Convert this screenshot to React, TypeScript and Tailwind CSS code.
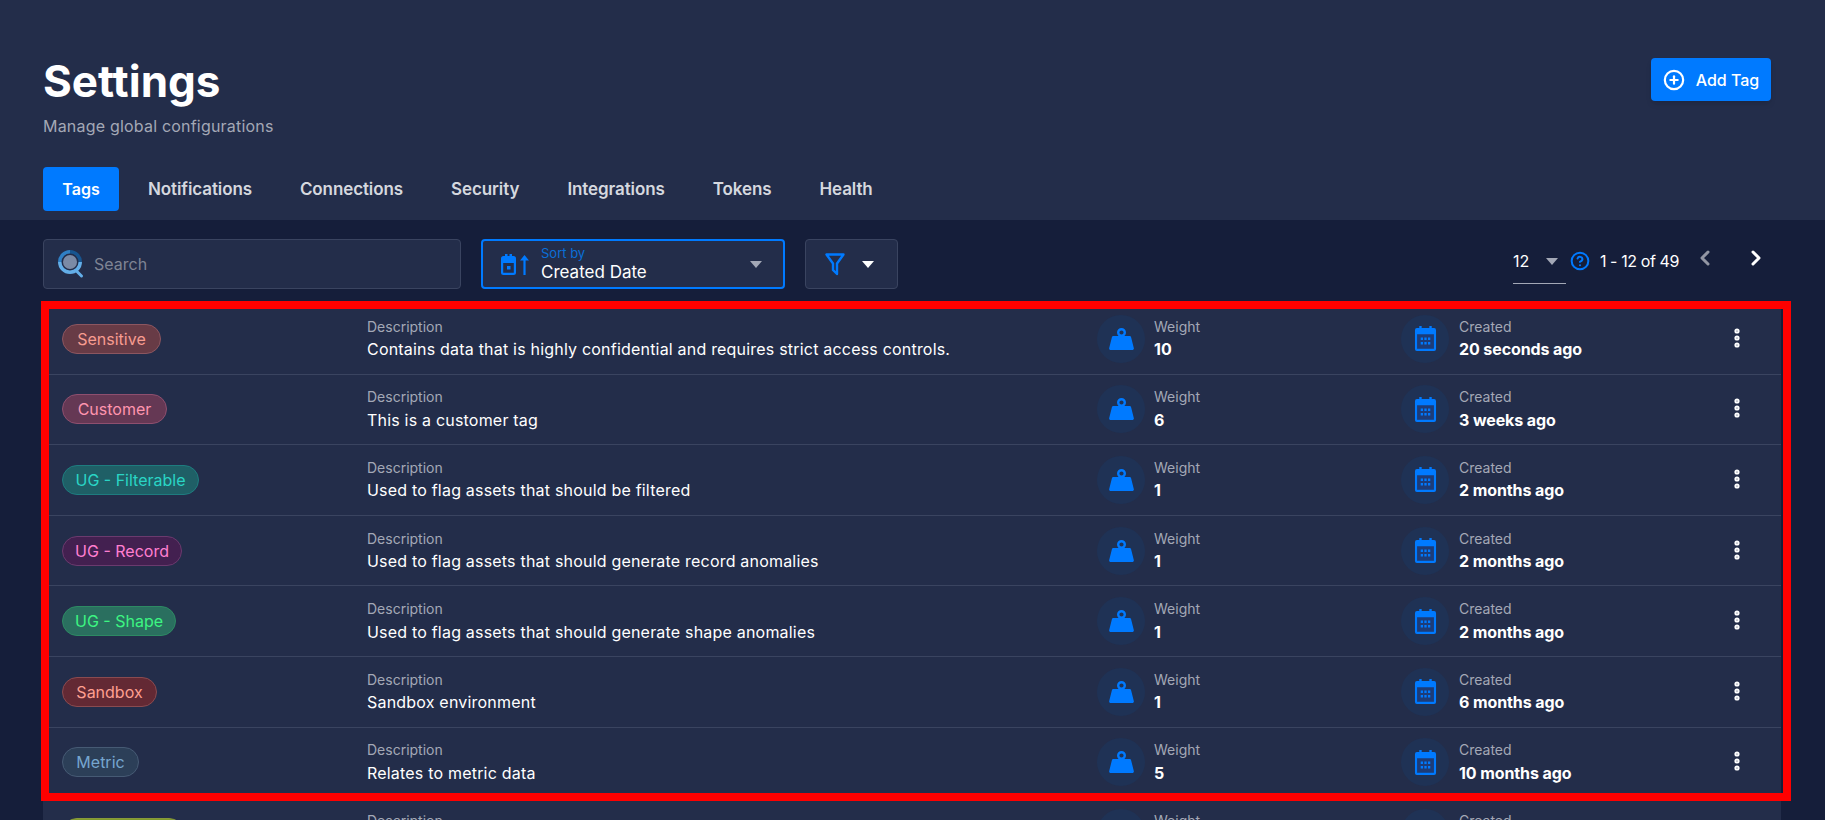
import { ChevronLeft, ChevronRight, CirclePlus, CircleHelp, EllipsisVertical } from 'lucide-react';

const tags = [
  { name: 'Sensitive', cls: 'w-[99px] bg-[#683b46] border-[#8c5660] text-[#f89c90]', desc: 'Contains data that is highly confidential and requires strict access controls.', weight: '10', created: '20 seconds ago' },
  { name: 'Customer', cls: 'w-[105px] bg-[#653854] border-[#8e4f6f] text-[#ff95ae]', desc: 'This is a customer tag', weight: '6', created: '3 weeks ago' },
  { name: 'UG - Filterable', cls: 'w-[137px] bg-[#1f5f66] border-[#1e7c7f] text-[#2ad5c5]', desc: 'Used to flag assets that should be filtered', weight: '1', created: '2 months ago' },
  { name: 'UG - Record', cls: 'w-[120px] bg-[#432050] border-[#6b3a6e] text-[#ff7fd0]', desc: 'Used to flag assets that should generate record anomalies', weight: '1', created: '2 months ago' },
  { name: 'UG - Shape', cls: 'w-[114px] bg-[#2a6f5f] border-[#2d8a63] text-[#3df582]', desc: 'Used to flag assets that should generate shape anomalies', weight: '1', created: '2 months ago' },
  { name: 'Sandbox', cls: 'w-[95px] bg-[#632934] border-[#8a4b50] text-[#ff9f90]', desc: 'Sandbox environment', weight: '1', created: '6 months ago' },
  { name: 'Metric', cls: 'w-[77px] bg-[#2c3f58] border-[#465a74] text-[#76a6cf]', desc: 'Relates to metric data', weight: '5', created: '10 months ago' },
  { name: 'Production', cls: 'w-[122px] bg-[#7f9a2c] border-[#87993a] text-[#d6ee55]', desc: 'Used to flag production assets', weight: '1', created: '10 months ago' },
];

const tabs = ['Notifications', 'Connections', 'Security', 'Integrations', 'Tokens', 'Health'];

function WeightIcon() {
  return (
    <svg width="25" height="22" viewBox="0 0 25 22" fill="#007aff">
      <circle cx="12.5" cy="4.500" r="3.300" fill="none" stroke="#007aff" strokeWidth="2.400" />
      <path d="M4.500 8H20.500c.8 0 1.400.5 1.600 1.200L24.800 20c.3 1-.4 2-1.400 2H1.600c-1 0-1.700-1-1.400-2L2.900 9.200C3.100 8.500 3.700 8 4.500 8z" />
    </svg>
  );
}

function CalendarIcon() {
  return (
    <svg width="23" height="25" viewBox="0 0 24 24" preserveAspectRatio="none" fill="#007aff">
      <rect x="3" y="7" width="18" height="15" fill="#1d3c78" />
      <path fillRule="evenodd" d="M5.500 0H8v2h8V0h2.500v2H21a2 2 0 0 1 2 2v18a2 2 0 0 1-2 2H3a2 2 0 0 1-2-2V4a2 2 0 0 1 2-2h2.500V0zM3.200 8v13.800h17.600V8H3.200z" />
      <path d="M7 11h2.400v2.400H7zM10.800 11h2.400v2.400h-2.400zM14.600 11H17v2.400h-2.400zM7 15.400h2.400v2.400H7zM10.800 15.400h2.400v2.400h-2.400zM14.600 15.400H17v2.400h-2.400z" />
    </svg>
  );
}

function SortDateIcon() {
  return (
    <svg width="28" height="21" viewBox="0 0 28 21" fill="#007aff">
      <path fillRule="evenodd" d="M2.500 2H4V0h2.500v2h2V0H11v2h1.500A2.500 2.500 0 0 1 15 4.500v14a2.500 2.500 0 0 1-2.500 2.500h-10A2.500 2.500 0 0 1 0 18.500v-14A2.500 2.500 0 0 1 2.500 2zM2.200 9v9.800h10.600V9H2.200zM6 12h3.500v3.500H6V12z" />
      <path d="M23.500 1L28 6.500h-3.400V21h-2.200V6.500H19z" />
    </svg>
  );
}

function FilterIcon() {
  return (
    <svg width="20" height="23" viewBox="0 0 20 23" fill="none" stroke="#007aff" strokeWidth="2.400" strokeLinejoin="round">
      <path d="M1.500 1.500H18.500L12 10.500V21L8 17V10.500z" />
    </svg>
  );
}

function SearchLogo() {
  return (
    <svg width="26" height="29" viewBox="0 0 26 29" fill="none" strokeWidth="3.500">
      <circle cx="12" cy="12" r="7" fill="#7b8aa5" stroke="none" />
      <path d="M12 1.750A10.250 10.250 0 0 1 22.250 12" stroke="#17558f" />
      <path d="M12 1.750A10.250 10.250 0 0 0 1.750 12" stroke="#2f7fc4" />
      <path d="M1.750 12A10.250 10.250 0 0 0 22.250 12" stroke="#63aee8" />
      <path d="M18.500 21l5 5" stroke="#63aee8" strokeWidth="3" strokeLinecap="round" />
    </svg>
  );
}

function Caret({ className }: { className: string }) {
  return <span className={`w-0 h-0 border-x-[6.5px] border-x-transparent border-t-[7px] ${className}`} />;
}

function TagRow({ row }: { row: (typeof tags)[number] }) {
  return (
    <div className="h-[70.6px] shrink-0 grid grid-cols-[305px_730px_304px_1fr] items-center pl-[19px] border-b border-[#3a4460]">
      <div>
        <span className={`block h-[30px] leading-[28px] text-center rounded-full border text-base ${row.cls}`}>{row.name}</span>
      </div>
      <div>
        <div className="mt-[0.5px] text-sm leading-[20px] text-[#a3a8b6]">Description</div>
        <div className="mt-[0.5px] text-base leading-[24px] tracking-[0.2px] text-white">{row.desc}</div>
      </div>
      <div className="flex items-center gap-[9px]">
        <div className="size-12 rounded-full bg-[#1f3255] flex items-center justify-center"><WeightIcon /></div>
        <div>
          <div className="mt-[0.5px] text-sm leading-[20px] text-[#a3a8b6]">Weight</div>
          <div className="mt-[0.5px] text-base leading-[24px] font-bold text-white">{row.weight}</div>
        </div>
      </div>
      <div className="flex items-center justify-between pr-[32px]">
        <div className="flex items-center gap-[10px]">
          <div className="size-12 rounded-full bg-[#1f3255] flex items-center justify-center"><CalendarIcon /></div>
          <div>
            <div className="mt-[0.5px] text-sm leading-[20px] text-[#a3a8b6]">Created</div>
            <div className="mt-[0.5px] text-base leading-[24px] font-bold tracking-[-0.1px] text-white">{row.created}</div>
          </div>
        </div>
        <EllipsisVertical className="size-6 -mt-[2px] text-white" strokeWidth={3.2} />
      </div>
    </div>
  );
}

export default function App() {
  return (
    <div className="relative h-[820px] overflow-hidden bg-[#151e3a] text-white font-['Inter','Noto_Sans',sans-serif]">
      <header className="h-[220px] bg-[#232d4a] px-[43px] pt-[48px]">
        <div className="flex justify-between">
          <div>
            <h1 className="text-[44px] leading-[66px] font-bold">Settings</h1>
            <p className="text-base leading-[24px] tracking-[0.2px] text-[#a3a8b6]">Manage global configurations</p>
          </div>
          <button className="mt-[10px] mr-[11px] h-[43px] w-[120px] rounded bg-[#007aff] flex items-center justify-center gap-[11px] text-base font-medium shadow-md">
            <CirclePlus className="size-[22px]" strokeWidth={2.400} />
            Add Tag
          </button>
        </div>
        <nav className="mt-[29px] flex items-center gap-[29px] font-semibold text-[17px] text-[#d5d8df]">
          <span className="h-[44px] w-[76px] rounded bg-[#007aff] text-white text-base flex items-center justify-center">Tags</span>
          <div className="pt-[2px] flex items-center gap-[48px] tracking-[-0.1px]">
            {tabs.map((t) => <span key={t}>{t}</span>)}
          </div>
        </nav>
      </header>

      <div className="h-[84px] pt-[19px] px-[43px] flex items-start gap-5">
        <div className="w-[418px] h-[50px] rounded border border-[#3a4460] bg-[#232d4a] flex items-center pl-[14px] gap-[10px]">
          <SearchLogo />
          <span className="text-base text-[#7e8494]">Search</span>
        </div>
        <div className="w-[304px] h-[50px] rounded border-2 border-[#007aff] bg-[#232d4a] flex items-center pl-[18px] pr-[21px]">
          <SortDateIcon />
          <div className="ml-[12px]">
            <div className="text-[13px] leading-[15px] text-[#0a6fd8]">Sort by</div>
            <div className="text-[17px] leading-[22px] text-white">Created Date</div>
          </div>
          <Caret className="ml-auto border-t-[#a3a8b6]" />
        </div>
        <div className="w-[93px] h-[50px] rounded border border-[#3a4460] bg-[#232d4a] flex items-center pl-[19px] gap-[17px]">
          <FilterIcon />
          <Caret className="border-t-white" />
        </div>
        <div className="ml-auto mr-[14px] h-[44px] flex items-center text-base">
          <div className="relative w-[53px] flex items-center justify-between pr-[8px]">
            12
            <Caret className="border-t-[#a3a8b6]" />
            <span className="absolute left-0 right-0 top-[34px] h-px bg-[#a3a8b6]" />
          </div>
          <CircleHelp className="ml-[4px] size-5 text-[#007aff]" strokeWidth={2.400} />
          <span className="ml-[10px] tracking-[-0.4px]">1 - 12 of 49</span>
          <ChevronLeft className="ml-[14px] -mt-[6px] size-6 text-[#9296a3]" strokeWidth={3} />
          <ChevronRight className="ml-[27px] -mt-[6px] size-6 text-white" strokeWidth={3} />
        </div>
      </div>

      <div className="ml-[43px] w-[1738px] bg-[#232d4a] flex flex-col">
        {tags.map((row) => <TagRow key={row.name} row={row} />)}
      </div>

      <div className="absolute left-[41px] top-[301px] w-[1750px] h-[500px] border-[8px] border-[#ff0000] pointer-events-none" />
    </div>
  );
}
